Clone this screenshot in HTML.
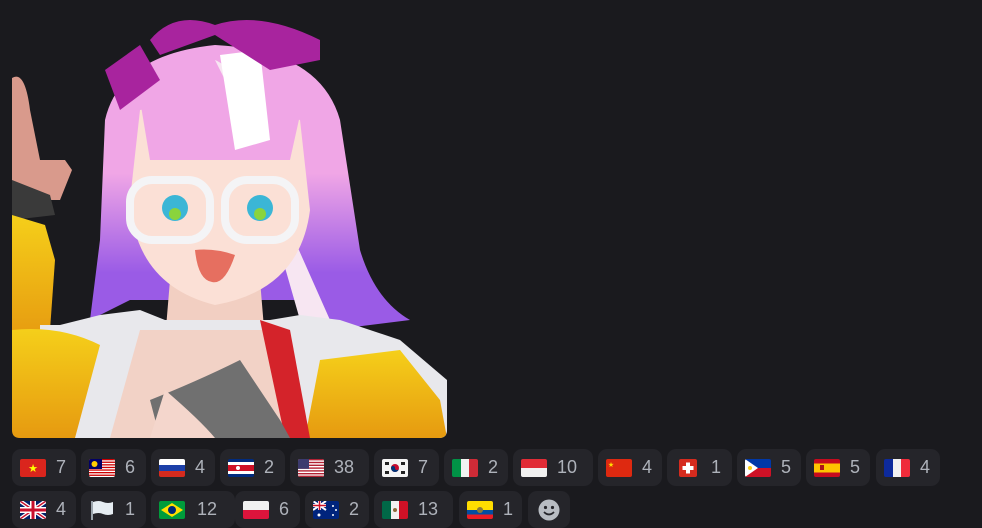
<!DOCTYPE html>
<html><head><meta charset="utf-8"><style>
body{margin:0;background:#1a1a1e;width:982px;height:527px;overflow:hidden;position:relative;font-family:"Liberation Sans",sans-serif}
.p{position:absolute;height:37px;background:#25252a;border-radius:9px;box-sizing:border-box;padding-left:8px;display:flex;align-items:center}
.p svg{width:26px;height:18px;border-radius:2px;flex:none}
.p span{color:#aeb2ba;font-size:18px;margin-left:10px}
</style></head><body>
<svg style="position:absolute;left:12px;top:0" width="436" height="438" viewBox="12 0 436 438">
<defs><clipPath id="c"><path d="M12 0H447V430Q447 438 439 438H20Q12 438 12 430Z"/></clipPath>
<linearGradient id="h" x1="0" y1="0" x2="0" y2="1"><stop offset=".45" stop-color="#f0a6e6"/><stop offset=".8" stop-color="#9a5be6"/></linearGradient>
<linearGradient id="y" x1="0" y1="0" x2="0" y2="1"><stop offset="0" stop-color="#f5cf1a"/><stop offset="1" stop-color="#e69a10"/></linearGradient></defs>
<g clip-path="url(#c)">
<path d="M12 78Q25 70 30 110L40 160L65 160L72 170L60 200L12 200Z" fill="#d99a8c"/>
<path d="M12 180L50 195L55 215L12 220Z" fill="#3a3a3a"/>
<path d="M12 215L45 225L55 260L50 330L12 340Z" fill="url(#y)"/>
<path d="M105 120Q120 55 215 45Q320 50 340 120L360 250Q375 300 410 320L330 330L300 300L130 300L90 320L100 240Z" fill="url(#h)"/>
<path d="M215 60Q240 70 275 150L290 230L330 320L300 320L280 250L260 150Z" fill="#f7e6f2"/>
<path d="M170 280L260 280L265 340L165 340Z" fill="#f2cfc2"/>
<path d="M140 110Q215 95 300 120L310 210Q300 290 215 305Q135 285 130 200Z" fill="#fbe0d6"/>
<path d="M140 100Q215 80 300 115L290 160L150 160Z" fill="#f0a6e6"/>
<path d="M220 55L260 50L270 140L235 150Z" fill="#fff"/>
<path d="M150 40Q175 10 215 25Q260 10 320 40L320 60L270 70L215 35L160 55Z" fill="#a8249e"/>
<path d="M105 70L140 45L160 80L120 110Z" fill="#a8249e"/>
<rect x="130" y="180" width="80" height="60" rx="22" fill="none" stroke="#f4f4f6" stroke-width="8"/>
<rect x="225" y="180" width="70" height="60" rx="22" fill="none" stroke="#f4f4f6" stroke-width="8"/>
<circle cx="175" cy="208" r="13" fill="#3bb6d6"/><circle cx="260" cy="208" r="13" fill="#3bb6d6"/>
<circle cx="175" cy="214" r="6" fill="#8ad43c"/><circle cx="260" cy="214" r="6" fill="#8ad43c"/>
<path d="M195 250Q215 248 235 255Q225 285 212 282Q198 280 195 250Z" fill="#e66f60"/>
<path d="M40 325L60 325L100 315L140 310L165 320L270 320L300 315L340 320L400 340L447 380V438H40Z" fill="#e8e8ec"/>
<path d="M12 330Q60 325 100 345L75 438H12Z" fill="url(#y)"/>
<path d="M320 360L400 350L440 400L447 438H305Z" fill="url(#y)"/>
<path d="M140 330L265 330L300 438H110Z" fill="#f2d2c6"/>
<path d="M260 320L290 330L310 438H285Z" fill="#d4232a"/>
<path d="M150 400Q200 380 240 360L280 420L290 438H160Z" fill="#707070"/>
<path d="M165 390Q200 420 215 438H150Z" fill="#f4d6cc"/>
</g></svg>

<div class="p" style="left:12px;top:449px;width:64px"><svg viewBox="0 0 26 18"><rect width="26" height="18" fill="#da251d"/><text x="13" y="13" font-size="11" text-anchor="middle" fill="#ff0">★</text></svg><span>7</span></div>
<div class="p" style="left:81px;top:449px;width:65px"><svg viewBox="0 0 26 18"><rect width="26" height="18" fill="#fff"/><g fill="#cc0001"><rect y="0" width="26" height="1.3"/><rect y="2.6" width="26" height="1.3"/><rect y="5.2" width="26" height="1.3"/><rect y="7.8" width="26" height="1.3"/><rect y="10.4" width="26" height="1.3"/><rect y="13" width="26" height="1.3"/><rect y="15.6" width="26" height="1.3"/></g><rect width="13" height="10" fill="#010066"/><circle cx="5.5" cy="5" r="3" fill="#fc0"/></svg><span>6</span></div>
<div class="p" style="left:151px;top:449px;width:64px"><svg viewBox="0 0 26 18"><rect width="26" height="6" fill="#fff"/><rect y="6" width="26" height="6" fill="#1c3fa8"/><rect y="12" width="26" height="6" fill="#d52b1e"/></svg><span>4</span></div>
<div class="p" style="left:220px;top:449px;width:65px"><svg viewBox="0 0 26 18"><rect width="26" height="18" fill="#002b7f"/><rect y="3" width="26" height="12" fill="#fff"/><rect y="6" width="26" height="6" fill="#ce1126"/><circle cx="10" cy="9" r="2" fill="#fff"/></svg><span>2</span></div>
<div class="p" style="left:290px;top:449px;width:79px"><svg viewBox="0 0 26 18"><rect width="26" height="18" fill="#fff"/><g fill="#b22234"><rect width="26" height="1.4"/><rect y="2.8" width="26" height="1.4"/><rect y="5.6" width="26" height="1.4"/><rect y="8.4" width="26" height="1.4"/><rect y="11.2" width="26" height="1.4"/><rect y="14" width="26" height="1.4"/><rect y="16.6" width="26" height="1.4"/></g><rect width="11" height="9.8" fill="#3c3b6e"/></svg><span>38</span></div>
<div class="p" style="left:374px;top:449px;width:65px"><svg viewBox="0 0 26 18"><rect width="26" height="18" fill="#f4f4f4"/><circle cx="13" cy="9" r="4" fill="#c60c30"/><path d="M9 9a4 4 0 0 0 8 0a2 2 0 0 1-4 0a2 2 0 0 0-4 0" fill="#003478"/><g fill="#222"><rect x="3" y="3" width="4" height="3"/><rect x="19" y="3" width="4" height="3"/><rect x="3" y="12" width="4" height="3"/><rect x="19" y="12" width="4" height="3"/></g></svg><span>7</span></div>
<div class="p" style="left:444px;top:449px;width:64px"><svg viewBox="0 0 26 18"><rect width="9" height="18" fill="#009246"/><rect x="9" width="8" height="18" fill="#f1f2f1"/><rect x="17" width="9" height="18" fill="#ce2b37"/></svg><span>2</span></div>
<div class="p" style="left:513px;top:449px;width:80px"><svg viewBox="0 0 26 18"><rect width="26" height="9" fill="#e12c36"/><rect y="9" width="26" height="9" fill="#f1f1f1"/></svg><span>10</span></div>
<div class="p" style="left:598px;top:449px;width:64px"><svg viewBox="0 0 26 18"><rect width="26" height="18" fill="#de2910"/><text x="5" y="8" font-size="7" text-anchor="middle" fill="#ffde00">★</text></svg><span>4</span></div>
<div class="p" style="left:667px;top:449px;width:65px"><svg viewBox="0 0 26 18"><rect x="4" width="18" height="18" rx="2" fill="#d52b1e"/><rect x="11" y="3.5" width="4" height="11" fill="#fff"/><rect x="7.5" y="7" width="11" height="4" fill="#fff"/></svg><span>1</span></div>
<div class="p" style="left:737px;top:449px;width:64px"><svg viewBox="0 0 26 18"><rect width="26" height="9" fill="#0038a8"/><rect y="9" width="26" height="9" fill="#ce1126"/><path d="M0 0L13 9L0 18Z" fill="#fff"/><circle cx="5" cy="9" r="2" fill="#fcd116"/></svg><span>5</span></div>
<div class="p" style="left:806px;top:449px;width:64px"><svg viewBox="0 0 26 18"><rect width="26" height="18" fill="#c60b1e"/><rect y="4.5" width="26" height="9" fill="#ffc400"/><rect x="6" y="6" width="4" height="5" fill="#ad1519"/></svg><span>5</span></div>
<div class="p" style="left:876px;top:449px;width:64px"><svg viewBox="0 0 26 18"><rect width="9" height="18" fill="#0d2a9c"/><rect x="9" width="8" height="18" fill="#f1f1f1"/><rect x="17" width="9" height="18" fill="#ef2b3a"/></svg><span>4</span></div>

<div class="p" style="left:12px;top:491px;width:64px"><svg viewBox="0 0 26 18"><rect width="26" height="18" fill="#012169"/><path d="M0 0L26 18M26 0L0 18" stroke="#fff" stroke-width="4"/><path d="M0 0L26 18M26 0L0 18" stroke="#c8102e" stroke-width="1.5"/><path d="M13 0V18M0 9H26" stroke="#fff" stroke-width="6"/><path d="M13 0V18M0 9H26" stroke="#c8102e" stroke-width="3"/></svg><span>4</span></div>
<div class="p" style="left:81px;top:491px;width:65px"><svg viewBox="0 0 26 20" style="height:20px"><rect x="2" y="1" width="2" height="19" fill="#9aa3ab"/><path d="M4 2Q10 0 14 2Q19 4 24 2V14Q19 16 14 14Q10 12 4 14Z" fill="#e6edf2"/></svg><span>1</span></div>
<div class="p" style="left:151px;top:491px;width:84px"><svg viewBox="0 0 26 18"><rect width="26" height="18" fill="#009c3b"/><path d="M13 2L24 9L13 16L2 9Z" fill="#ffdf00"/><circle cx="13" cy="9" r="4" fill="#002776"/></svg><span style="margin-left:12px">12</span></div>
<div class="p" style="left:235px;top:491px;width:65px"><svg viewBox="0 0 26 18"><rect width="26" height="9" fill="#f1f1f1"/><rect y="9" width="26" height="9" fill="#dc143c"/></svg><span>6</span></div>
<div class="p" style="left:305px;top:491px;width:64px"><svg viewBox="0 0 26 18"><rect width="26" height="18" fill="#00247d"/><path d="M0 0L13 9M13 0L0 9" stroke="#fff" stroke-width="2"/><path d="M6.5 0V9M0 4.5H13" stroke="#fff" stroke-width="3"/><path d="M6.5 0V9M0 4.5H13" stroke="#cf142b" stroke-width="1.5"/><g fill="#fff"><circle cx="6" cy="14" r="1.5"/><circle cx="20" cy="5" r="1"/><circle cx="20" cy="14" r="1"/><circle cx="23" cy="9" r="1"/></g></svg><span>2</span></div>
<div class="p" style="left:374px;top:491px;width:79px"><svg viewBox="0 0 26 18"><rect width="9" height="18" fill="#006847"/><rect x="9" width="8" height="18" fill="#f1f1f1"/><rect x="17" width="9" height="18" fill="#ce1126"/><circle cx="13" cy="9" r="2" fill="#8c6a3a"/></svg><span>13</span></div>
<div class="p" style="left:459px;top:491px;width:63px"><svg viewBox="0 0 26 18"><rect width="26" height="9" fill="#ffdd00"/><rect y="9" width="26" height="4.5" fill="#034ea2"/><rect y="13.5" width="26" height="4.5" fill="#ed1c24"/><circle cx="13" cy="9" r="3" fill="#8a7a3a"/></svg><span>1</span></div>
<div class="p" style="left:528px;top:491px;width:42px;padding-left:10px"><svg viewBox="0 0 22 22" style="width:22px;height:22px"><circle cx="11" cy="11" r="10.5" fill="#b8bcc2"/><circle cx="7.5" cy="8.5" r="1.6" fill="#25252a"/><circle cx="14.5" cy="8.5" r="1.6" fill="#25252a"/><path d="M6 13Q11 18 16 13" stroke="#25252a" stroke-width="1.8" fill="none"/></svg></div>
</body></html>
